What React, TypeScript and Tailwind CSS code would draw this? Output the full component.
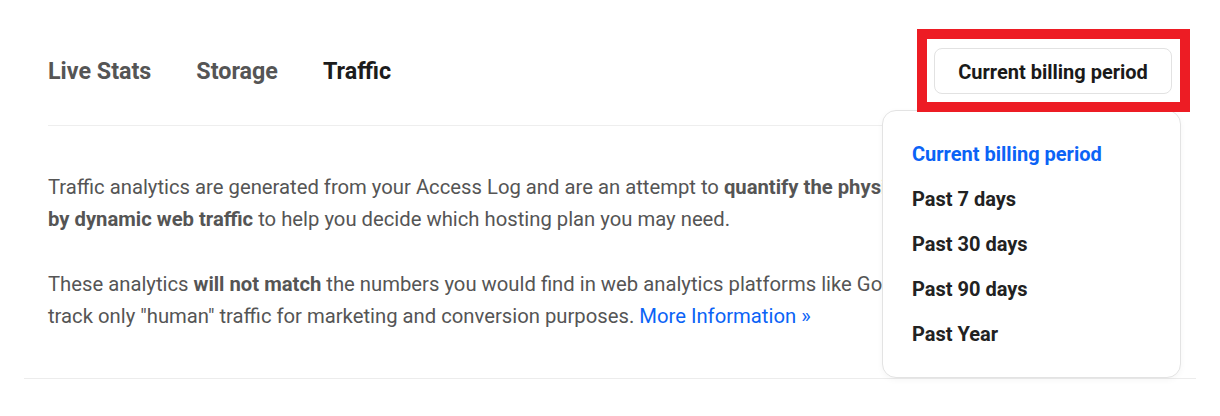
import React from 'react';

const tabs = ['Live Stats', 'Storage', 'Traffic'];
const periods = ['Current billing period', 'Past 7 days', 'Past 30 days', 'Past 90 days', 'Past Year'];

const PeriodMenu = () => (
  <div className="absolute right-[-9px] top-[62px] w-[299px] h-[268px] bg-white border border-[#e3e3e3] rounded-[14px] shadow-[0_2px_6px_rgba(0,0,0,0.04)] pl-[29px] pt-[30px] z-10">
    {periods.map((p, i) => (
      <div
        key={p}
        className={`h-[45px] text-[20px] font-bold leading-[27px] whitespace-nowrap ${i === 0 ? 'text-[#0b63f6]' : 'text-[#222]'}`}
      >
        {p}
      </div>
    ))}
  </div>
);

export default function App() {
  return (
    <div className="bg-white w-[1220px] h-[416px] px-6 font-['Roboto',sans-serif]">
      <div className="border-b border-[#ececec] h-[379px]">
        <div className="mx-6 h-[126px] border-b border-[#eeeeee] flex items-start justify-between">
          <div className="flex items-center gap-[45px] mt-[57px]">
            {tabs.map((t, i) => (
              <span
                key={t}
                className={`text-[23.3px] leading-[28px] font-bold ${i === 2 ? 'text-[#1c1c1c]' : 'text-[#555]'}`}
              >
                {t}
              </span>
            ))}
          </div>
          <div className="relative mt-[48px]">
            <button className="h-[46px] w-[238px] border border-[#e2e2e2] rounded-lg bg-white text-[20px] font-bold text-[#1a1a1a] pt-px">
              Current billing period
            </button>
            <PeriodMenu />
            <div className="absolute left-[-17px] top-[-19px] w-[273px] h-[83px] border-[10px] border-[#ed1c24] pointer-events-none z-20" />
          </div>
        </div>
        <div className="mx-6 pt-[45px] text-[20.25px] leading-[32px] text-[#555] whitespace-nowrap">
          <p>
            Traffic analytics are generated from your Access Log and are an attempt to{' '}
            <b className="font-bold">quantify the physical resources consumed</b>
            <br />
            <b className="font-bold">by dynamic web traffic</b> to help you decide which hosting plan you may need.
          </p>
          <p className="mt-[33px]">
            These analytics <b className="font-bold">will not match</b> the numbers you would find in web analytics platforms like Google Analytics, which
            <br />
            track only "human" traffic for marketing and conversion purposes.{' '}
            <a className="text-[#0b63f6]">More Information »</a>
          </p>
        </div>
      </div>
    </div>
  );
}
